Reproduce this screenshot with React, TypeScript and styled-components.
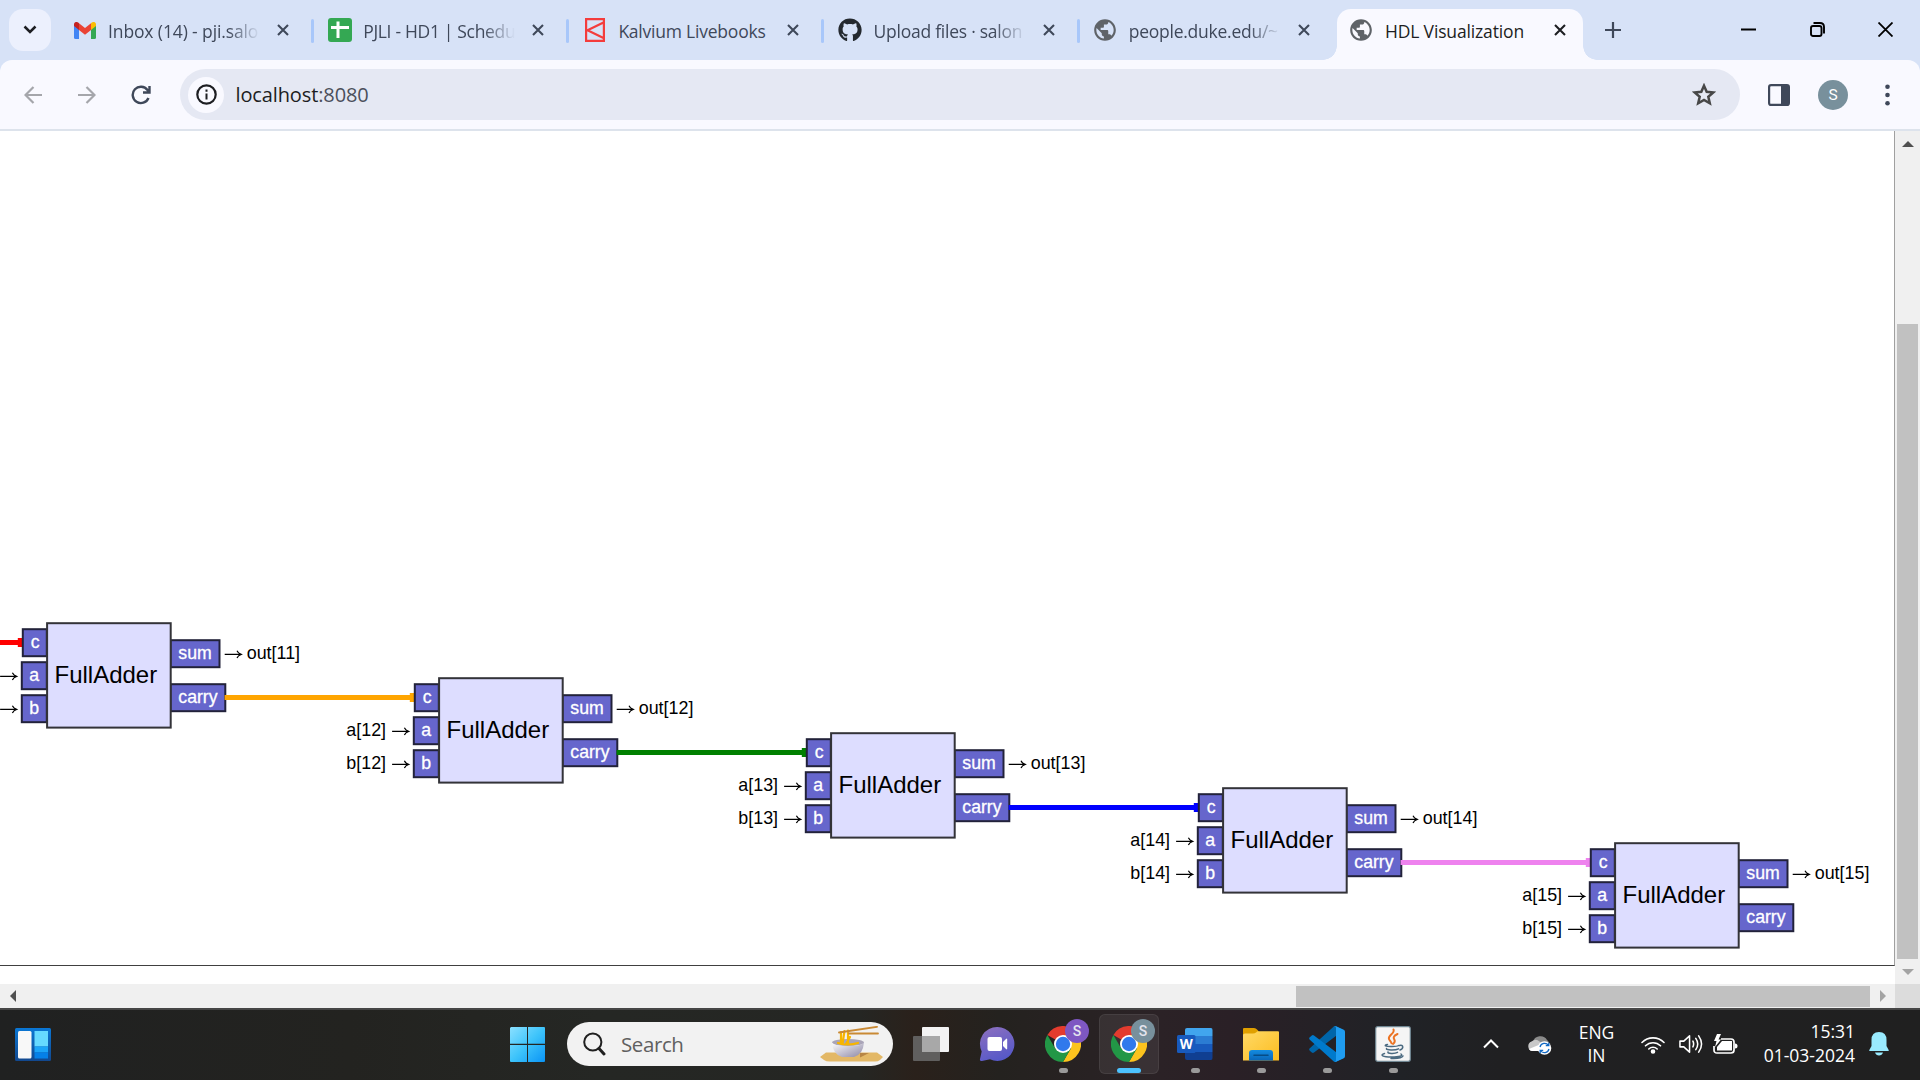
import React from "react";
import styled, { createGlobalStyle } from "styled-components";
import { FaGithub } from "react-icons/fa";
import { MdPublic } from "react-icons/md";

const ui = '"Open Sans", "Noto Sans", sans-serif';
const arial = '"Liberation Sans", Arial, sans-serif';

const Global = createGlobalStyle`
  * { box-sizing: border-box; }
  body { margin: 0; overflow: hidden; background: #fff; font-family: ${ui}; }
  svg { display: block; flex: none; }
`;

const Screen = styled.div`
  width: 1920px;
  height: 1080px;
  display: flex;
  flex-direction: column;
  overflow: hidden;
`;

/* ---------- browser chrome ---------- */
const TabStrip = styled.header`
  height: 60px;
  flex: none;
  display: flex;
  background: #d7e2f7;
  padding: 9px 0 0 9px;
`;
const TabSearch = styled.div`
  width: 42px;
  height: 42px;
  border-radius: 14px;
  background: #ecf0fd;
  display: grid;
  place-items: center;
  margin-right: 8px;
`;
const Tab = styled.div<{ $active?: boolean }>`
  position: relative;
  flex: none;
  width: ${(p) => (p.$active ? 246 : 255.2)}px;
  height: ${(p) => (p.$active ? 51 : 43)}px;
  margin-left: ${(p) => (p.$active ? 2 : 0)}px;
  padding-left: ${(p) => (p.$active ? 11 : 12)}px;
  display: flex;
  align-items: flex-start;
  background: ${(p) => (p.$active ? "#f9f9ff" : "transparent")};
  border-radius: 14px 14px 0 0;
  color: ${(p) => (p.$active ? "#1d1e22" : "#3f485a")};
  ${(p) =>
    p.$active &&
    `&::before, &::after {
      content: ""; position: absolute; bottom: 0; width: 14px; height: 14px;
    }
    &::before { left: -14px; background: radial-gradient(circle at 0 0, transparent 13.5px, #f9f9ff 14px); }
    &::after { right: -14px; background: radial-gradient(circle at 100% 0, transparent 13.5px, #f9f9ff 14px); }`}
`;
const Favicon = styled.div`
  width: 27px;
  height: 42px;
  display: grid;
  place-items: center;
  flex: none;
`;
const TabTitle = styled.div<{ $fade?: boolean; $spacing: number }>`
  flex: none;
  width: 152px;
  margin-left: 10px;
  height: 42px;
  line-height: 44px;
  font-size: 17.5px;
  letter-spacing: ${(p) => p.$spacing}px;
  white-space: nowrap;
  ${(p) => p.$fade && "mask-image: linear-gradient(90deg, #000 120px, transparent 152px);"}
`;
const CloseSlot = styled.div`
  width: 24px;
  height: 42px;
  margin-left: 11px;
  display: grid;
  place-items: center;
`;
const Divider = styled.div`
  width: 3px;
  height: 24px;
  margin: 10px 0 0 16px;
  border-radius: 2px;
  background: #a8c7fa;
`;
const NewTab = styled.div`
  width: 28px;
  height: 42px;
  margin-left: 16px;
  display: grid;
  place-items: center;
`;
const WindowButtons = styled.div`
  margin-left: auto;
  height: 42px;
  display: flex;
  align-items: center;
`;
const WinButton = styled.div`
  width: 68.5px;
  padding-bottom: 2px;
  display: grid;
  place-items: center;
`;
const ToolbarBack = styled.div`
  background: #d7e2f7;
  flex: none;
`;
const Toolbar = styled.nav`
  height: 71px;
  border-bottom: 2px solid #dde3ec;
  border-radius: 12px 12px 0 0;
  background: #f9f9ff;
  display: flex;
  align-items: center;
  padding-left: 6px;
`;
const ToolButton = styled.div<{ $w: number }>`
  width: ${(p) => p.$w}px;
  height: 51px;
  flex: none;
  display: grid;
  place-items: center;
`;
const Omnibox = styled.div`
  width: 1560px;
  height: 51px;
  flex: none;
  margin-left: 12px;
  border-radius: 26px;
  background: #e5e8f3;
  display: flex;
  align-items: center;
  padding: 0 24px 0 8px;
`;
const InfoDisc = styled.div`
  width: 36px;
  height: 36px;
  border-radius: 50%;
  background: #f9f9ff;
  display: grid;
  place-items: center;
`;
const Url = styled.div`
  flex: 1;
  margin-left: 11.5px;
  font-size: 20px;
  letter-spacing: -0.12px;
  line-height: 50px;
  color: #1d1e22;
  span { color: #4b4f5b; }
`;
const Avatar = styled.div`
  width: 30px;
  height: 30px;
  flex: none;
  border-radius: 50%;
  background: #78909c;
  color: #fff;
  font: 15.5px/31px Roboto, sans-serif;
  text-align: center;
`;

/* ---------- page ---------- */
const Viewport = styled.main`
  height: 877px;
  flex: none;
  display: grid;
  grid-template-columns: 1895px 25px;
  grid-template-rows: 853px 24px;
`;
const Page = styled.section`
  background: #fff;
  overflow: hidden;
`;
const Canvas = styled.div`
  height: 835px;
  border-right: 1px solid #a0a0a0;
  border-bottom: 1px solid #404040;
`;
const VScroll = styled.div`
  background: #f0f0f0;
  display: flex;
  flex-direction: column;
  align-items: center;
  justify-content: space-between;
`;
const HScroll = styled.div`
  background: #f0f0f0;
  display: flex;
  align-items: center;
`;
const ScrollArrow = styled.div`
  width: 25px;
  height: 25px;
  display: grid;
  place-items: center;
`;
const VThumb = styled.div`
  width: 21px;
  height: 635px;
  margin-top: auto;
  background: #c1c1c1;
`;
const HThumb = styled.div`
  width: 574px;
  height: 21px;
  margin-left: auto;
  background: #c1c1c1;
`;
const Corner = styled.div`
  background: #dcdcdc;
`;

const Body = styled.rect`
  fill: #ddddff;
  stroke: #333338;
  stroke-width: 2px;
`;
const Port = styled.rect`
  fill: #6666cc;
  stroke: #22223a;
  stroke-width: 2px;
`;
const NodeName = styled.text`
  font: 24px ${arial};
  fill: #000;
`;
const PortName = styled.text<{ $center?: boolean }>`
  font: 17.7px ${arial};
  fill: #fff;
  stroke: #fff;
  stroke-width: 0.3px;
  text-anchor: ${(p) => (p.$center ? "middle" : "start")};
`;
const Signal = styled.text`
  font: 17.9px ${arial};
  fill: #000;
`;
const Wire = styled.line`
  stroke-width: 5px;
`;
const Arrow = styled.path`
  fill: none;
  stroke: #000;
  stroke-width: 1.2px;
`;

const arrowAt = (x: number, y: number) => `M${x} ${y}h16.500M${x + 12.3} ${y - 3.6}q1 2.400 4.200 3.600q-3.200 1.200-4.200 3.600`;

const wires = ["#ff0000", "#ffa500", "#008000", "#0000ff", "#ee82ee"];

function Adder({ index }: { index: number }) {
  const i = index - 11;
  const x = 46.1 + i * 392;
  const y = 491.2 + i * 55;
  return (
    <g transform={`translate(${x} ${y})`}>
      <Wire x1={-213.5} x2={-24} y1={20.4} y2={20.4} stroke={wires[i]} />
      <rect x={-28.3} y={15.8} width={5} height={9} fill={wires[i]} />
      <Port x={-23.3} y={7} width={24} height={27} />
      <Port x={-24.3} y={40} width={25} height={27} />
      <Port x={-24.3} y={73} width={25} height={27} />
      <Port x={124.4} y={18} width={49} height={27} />
      <Port x={124.4} y={62} width={54.8} height={27} />
      <Body x={1} y={1} width={123.6} height={104.4} />
      <NodeName x={8.4} y={60.9}>FullAdder</NodeName>
      <PortName $center x={-11} y={25.6}>c</PortName>
      <PortName $center x={-12} y={58.6}>a</PortName>
      <PortName $center x={-12} y={91.4}>b</PortName>
      <PortName x={132.2} y={36.6}>sum</PortName>
      <PortName x={132.2} y={80.6}>carry</PortName>
      {i > 0 && <Signal x={-91.8} y={58.6}>{`a[${index}]`}</Signal>}
      <Arrow d={arrowAt(-46, 54.2)} />
      {i > 0 && <Signal x={-91.8} y={91.4}>{`b[${index}]`}</Signal>}
      <Arrow d={arrowAt(-46, 87.2)} />
      <Arrow d={arrowAt(178.6, 32.2)} />
      <Signal x={200.6} y={36.6}>{`out[${index}]`}</Signal>
    </g>
  );
}

/* ---------- taskbar ---------- */
const Taskbar = styled.footer`
  height: 72px;
  flex: none;
  border-top: 2px solid #464646;
  padding-bottom: 2px;
  background: linear-gradient(90deg, #202121 0, #232320 350px, #252724 600px, #252623 860px, #2a211b 915px, #24221f 1000px, #2b2226 1160px, #2a2026 1230px, #202226 1400px, #202022 1500px, #202020 1920px);
  display: flex;
  align-items: center;
  color: #fff;
`;
const WidgetSlot = styled.div`
  width: 494px;
  flex: none;
  padding-left: 15px;
`;
const Slot = styled.div`
  width: 66px;
  height: 68px;
  flex: none;
  display: grid;
  place-items: center;
`;
const Tile = styled.div<{ $active?: boolean }>`
  position: relative;
  width: 60px;
  height: 60px;
  border-radius: 6px;
  display: grid;
  place-items: center;
  background: ${(p) => (p.$active ? "rgba(255,255,255,.07)" : "transparent")};
  border: 1px solid ${(p) => (p.$active ? "rgba(255,255,255,.07)" : "transparent")};
`;
const Pill = styled.div<{ $active?: boolean }>`
  position: absolute;
  bottom: 0;
  left: calc(50% - ${(p) => (p.$active ? 12 : 4.5)}px);
  width: ${(p) => (p.$active ? 24 : 9)}px;
  height: 5px;
  border-radius: 3px;
  background: ${(p) => (p.$active ? "#4cc2ff" : "#9a9a9a")};
`;
const Badge = styled.div<{ $color: string }>`
  position: absolute;
  left: 31px;
  top: 4px;
  width: 24px;
  height: 24px;
  border-radius: 50%;
  background: ${(p) => p.$color};
  color: #e4e4ee;
  font: 500 14px/24px Roboto, sans-serif;
  text-align: center;
`;
const SearchBox = styled.div`
  width: 326px;
  height: 44px;
  flex: none;
  margin: 0 5px 0 7px;
  padding: 0 10px 0 16px;
  border-radius: 22px;
  background: #f2f2f2;
  display: flex;
  align-items: center;
`;
const SearchText = styled.div`
  flex: 1;
  margin-left: 15px;
  font-size: 20.5px;
  letter-spacing: -0.4px;
  color: #606060;
`;
const Tray = styled.div`
  margin-left: auto;
  width: 450px;
  display: flex;
  align-items: center;
`;
const TraySlot = styled.div<{ $w: number }>`
  width: ${(p) => p.$w}px;
  flex: none;
  display: grid;
  place-items: center;
`;
const Lang = styled.div`
  width: 61px;
  flex: none;
  text-align: center;
  font-size: 17.5px;
  line-height: 23px;
  letter-spacing: -0.1px;
`;
const Clock = styled.div`
  width: 107px;
  flex: none;
  padding-bottom: 2px;
  text-align: right;
  font-size: 17.5px;
  line-height: 24px;
`;

const Globe = () => <MdPublic size={26} color="#5f6368" />;

const Cross = ({ color = "#3f485a" }) => (
  <svg width="12" height="12" viewBox="0 0 12 12"><path d="M1 1l10 10M11 1L1 11" stroke={color} strokeWidth="2.1" /></svg>
);

const Gmail = () => (
  <svg width="22" height="17" viewBox="0 0 22 17">
    <path d="M0 3v12.5Q0 17 1.5 17H5V7z" fill="#4285f4" />
    <path d="M22 3v12.5q0 1.500-1.500 1.500H17V7z" fill="#34a853" />
    <path d="M5 8V1.200L11 6l6-4.800V8l-6 4.800z" fill="#ea4335" />
    <path d="M0 4V2.500C0 .2 2.500-.8 4.200.6L5 1.200V8L0 4z" fill="#c5221f" />
    <path d="M22 4V2.500c0-2.300-2.500-3.300-4.200-1.900L17 1.200V8z" fill="#fbbc04" />
  </svg>
);
const Sheets = () => (
  <svg width="24" height="24" viewBox="0 0 24 24"><rect width="24" height="24" rx="3" fill="#34a853" /><path d="M10 3.500V20M3 9.500h18" stroke="#fff" strokeWidth="3" /></svg>
);
const Kalvium = () => (
  <svg width="20" height="24" viewBox="0 0 20 24" fill="none" stroke="#f43c3c" strokeWidth="2.200"><path d="M1.100 1.100h17.800v21.800H1.100zM18.500 4.500L2.500 12.300l16 7.600" /></svg>
);

const tabs = [
  { title: "Inbox (14) - pji.salo", icon: <Gmail />, fade: true, spacing: -0.12 },
  { title: "PJLI - HD1 | Schedu", icon: <Sheets />, fade: true, spacing: -0.32 },
  { title: "Kalvium Livebooks", icon: <Kalvium />, spacing: -0.22 },
  { title: "Upload files · salon", icon: <FaGithub size={24} color="#24292f" />, fade: true, spacing: -0.25 },
  { title: "people.duke.edu/~", icon: <Globe />, fade: true, spacing: -0.25 },
];

const Chrome = () => (
  <svg width="36" height="36" viewBox="0 0 36 36">
    <path d="M18 18L2.400 9A18 18 0 0 1 33.600 9z" fill="#e33b2e" />
    <path d="M18 9h15.600A18 18 0 0 1 18 36l7.800-13.500z" fill="#fcc31e" />
    <path d="M2.400 9A18 18 0 0 0 18 36l7.800-13.500H10.200z" fill="#229746" />
    <circle cx="18" cy="18" r="9" fill="#fff" />
    <circle cx="18" cy="18" r="7.200" fill="#3079ec" />
  </svg>
);
const Word = () => (
  <svg width="36" height="36" viewBox="0 0 36 36">
    <path d="M8 4q0-2 2-2h24q1.500 0 1.500 2v6H8z" fill="#41a5ee" />
    <path d="M8 10h27.500v8H8z" fill="#2b7cd3" />
    <path d="M8 18h27.500v8H8z" fill="#185abd" />
    <path d="M8 26h27.500v6q0 2-1.500 2H10q-2 0-2-2z" fill="#103f91" />
    <rect x="0" y="9" width="18.500" height="18" rx="1.500" fill="#185abd" />
    <text x="9.200" y="23" textAnchor="middle" fontFamily="Open Sans" fontWeight="700" fontSize="13.500" fill="#fff">W</text>
  </svg>
);
const Folder = () => (
  <svg width="36" height="36" viewBox="0 0 36 36">
    <defs><linearGradient id="folder" x2="1" y2="1"><stop stopColor="#ffd966" /><stop offset="1" stopColor="#fcbd20" /></linearGradient>
    <linearGradient id="tray" x2="0" y2="1"><stop stopColor="#138be0" /><stop offset="1" stopColor="#0a66b8" /></linearGradient></defs>
    <path d="M0 3q0-1 1-1h10q2 0 3 1.500L15.500 5v5H0z" fill="#e0a000" />
    <path d="M0 9q0-1.500 2-1.500h8q2 0 3-1l1.500-1.200H35q1 0 1 1V34.500H0z" fill="url(#folder)" />
    <path d="M6 34.500V27q0-3 3-3h18q3 0 3 3v7.500z" fill="url(#tray)" />
    <path d="M11 29.200h14" stroke="#064c86" strokeWidth="1.500" strokeLinecap="round" />
  </svg>
);
const VSCode = () => (
  <svg width="36" height="36" viewBox="0 0 36 36">
    <path d="M35.200 4.200L27 .2q-1.500-.4-2.500.5L.8 22.300q-1.300 1.200 0 2.400l2 1.800q1 .8 2.200.1L33.500 5z" fill="#0065a9" />
    <path d="M35.200 31.800L27 35.800q-1.500.4-2.500-.5L.8 13.700q-1.300-1.200 0-2.400l2-1.800q1-.8 2.200-.1L33.500 31z" fill="#007acc" />
    <path d="M27 35.800q-1.600.4-2.500-.5 2.500 1.600 2.500-1.500V2.200q0-3-2.500-1.500Q25.500-.2 27 .2l7.700 3.600q1.300.6 1.300 2v24.400q0 1.400-1.300 2z" fill="#1f9cf0" />
  </svg>
);
const Java = () => (
  <svg width="36" height="36" viewBox="0 0 36 36">
    <rect x=".7" y=".7" width="34.600" height="34.600" rx="2" fill="#f5f5f5" stroke="#718894" strokeWidth="1.200" />
    <g fill="none" strokeLinecap="round">
      <path d="M18.500 3.500c1.800 4-6 6-4.500 9.500.5 1.500 2 2.500 2.500 4.200M22.500 8c-5 2.200-4 4.200-3 6 .7 1.500 0 2.800-1.500 4" stroke="#ec7424" strokeWidth="2" />
      <path d="M12.500 18.500c-4 .8-2.500 2.200 4.500 2 3.500 0 5.500-.3 6.500-1M11.500 22.500c-1 1.800 9 2 12 .3M13 26c-1 1.600 6.500 2 9.500.4M24.500 19.500c4-1.200 4.500 3 .5 4.500M9.500 27.500c-5 1.500-2 3.500 7 3.500 8 0 12-1.200 9.500-3M28 30c-1 2-6 2.800-12 2.500" stroke="#4b6a80" strokeWidth="1.500" />
    </g>
  </svg>
);
const Chat = () => (
  <svg width="36" height="36" viewBox="0 0 36 36">
    <defs><linearGradient id="chat" x1=".2" x2=".6" y2="1"><stop stopColor="#8a6fc0" /><stop offset="1" stopColor="#5558c8" /></linearGradient></defs>
    <path d="M18.500 1a17 17 0 1 1-7.500 32.300L3 35q-2.500.3-2-2l1.700-7.500A17 17 0 0 1 18.500 1z" fill="url(#chat)" />
    <rect x="8.500" y="11" width="14.500" height="14" rx="2" fill="#fff" />
    <path d="M24 16l3-3q1.200-1 1.200.5v9q0 1.500-1.200.5l-3-3z" fill="#fff" />
  </svg>
);
const Noodles = () => (
  <svg width="63" height="36" viewBox="0 0 63 36">
    <defs><linearGradient id="bowl" x2="1" y2="1"><stop stopColor="#fff" /><stop offset="1" stopColor="#8c87a4" /></linearGradient></defs>
    <path d="M0 31l6-4.500h51l6 4.500-3 3q-2 1.500-5 1.500H10q-4 0-6-1.500z" fill="#e3b866" />
    <path d="M40 27h9l-9 4.500z" fill="#b88645" />
    <ellipse cx="28" cy="16.500" rx="16" ry="3.500" fill="#aaa5b8" />
    <path d="M12 16.500q1 12 10 14.500h12q9-2.500 10-14.500-2 3.500-16 3.500t-16-3.500z" fill="url(#bowl)" />
    <path d="M18 17q10 3 20 0M21 6v12M24.500 5l-2 13M28 4.500V18M30 11l-4 7" stroke="#f7b500" strokeWidth="2.200" fill="none" strokeLinecap="round" />
    <path d="M19 6.500L57 .8M29 7.500h29" stroke="#c98a35" strokeWidth="1.800" strokeLinecap="round" />
  </svg>
);

const apps: { icon: React.ReactNode; badge?: string; active?: boolean }[] = [
  { icon: <Chrome />, badge: "#7e57c2" },
  { icon: <Chrome />, badge: "#78909c", active: true },
  { icon: <Word /> },
  { icon: <Folder /> },
  { icon: <VSCode /> },
  { icon: <Java /> },
];

export default function App() {
  return (
    <Screen>
      <Global />
      <TabStrip>
        <TabSearch>
          <svg width="14" height="10" viewBox="0 0 14 10"><path d="M1.500 1.500L7 7l5.500-5.500" fill="none" stroke="#1d1e22" strokeWidth="2.500" /></svg>
        </TabSearch>
        {tabs.map((t, i) => (
          <Tab key={t.title}>
            <Favicon>{t.icon}</Favicon>
            <TabTitle $fade={t.fade} $spacing={t.spacing}>{t.title}</TabTitle>
            <CloseSlot><Cross /></CloseSlot>
            {i < tabs.length - 1 && <Divider />}
          </Tab>
        ))}
        <Tab $active>
          <Favicon><Globe /></Favicon>
          <TabTitle $spacing={-0.15}>HDL Visualization</TabTitle>
          <CloseSlot><Cross color="#1d1e22" /></CloseSlot>
        </Tab>
        <NewTab><svg width="16" height="16" viewBox="0 0 16 16"><path d="M8 0v16M0 8h16" stroke="#3f485a" strokeWidth="2.200" /></svg></NewTab>
        <WindowButtons>
          <WinButton><svg width="15" height="15"><path d="M0 7.500h15" stroke="#000" strokeWidth="2" /></svg></WinButton>
          <WinButton><svg width="15" height="15" viewBox="0 0 15 15" fill="none" stroke="#000" strokeWidth="1.900"><rect x="1" y="4" width="10.500" height="10" rx="2" /><path d="M3.500 1H10q4 0 4 4v6.500" /></svg></WinButton>
          <WinButton><svg width="15" height="15" viewBox="0 0 15 15"><path d="M.5.5l14 14M14.500.5l-14 14" stroke="#000" strokeWidth="1.800" /></svg></WinButton>
        </WindowButtons>
      </TabStrip>
      <ToolbarBack>
        <Toolbar>
          <ToolButton $w={54}><svg width="18" height="18" viewBox="0 0 18 18" fill="none" stroke="#a5a6ab" strokeWidth="2.200"><path d="M18 9H2M9.500 1L1.500 9l8 8" /></svg></ToolButton>
          <ToolButton $w={54}><svg width="18" height="18" viewBox="0 0 18 18" fill="none" stroke="#a5a6ab" strokeWidth="2.200"><path d="M0 9h16M8.500 1l8 8-8 8" /></svg></ToolButton>
          <ToolButton $w={54}><svg width="20" height="20" viewBox="0 0 20 20" fill="none" stroke="#3f485a" strokeWidth="2.400"><path d="M17.500 13A8.200 8.200 0 1 1 16.500 5L18 7M18.500 1v6.500H12" /></svg></ToolButton>
          <Omnibox>
            <InfoDisc><svg width="21" height="21" viewBox="0 0 21 21" fill="none" stroke="#1d1e22"><circle cx="10.500" cy="10.500" r="9.200" strokeWidth="2.200" /><path d="M10.500 9.500v6M10.500 5.500v2.200" strokeWidth="2" /></svg></InfoDisc>
            <Url>localhost<span>:8080</span></Url>
            <svg width="24" height="23" viewBox="0 0 24 23"><path d="M12 2.700l2.700 6.100 6.700.6-5.100 4.400 1.500 6.500-5.800-3.400-5.800 3.400 1.500-6.500-5.100-4.400 6.700-.6z" fill="none" stroke="#474747" strokeWidth="2.500" /></svg>
          </Omnibox>
          <ToolButton $w={78}><svg width="22" height="22" viewBox="0 0 22 22"><rect x="1.100" y="1.100" width="19.800" height="19.800" rx="2" fill="none" stroke="#3f485a" strokeWidth="2.200" /><path d="M13 1h8v20h-8z" fill="#3f485a" /></svg></ToolButton>
          <Avatar>S</Avatar>
          <ToolButton $w={78}><svg width="5" height="22" viewBox="0 0 5 22" fill="#3f485a"><circle cx="2.500" cy="2.700" r="2.300" /><circle cx="2.500" cy="11" r="2.300" /><circle cx="2.500" cy="19.300" r="2.300" /></svg></ToolButton>
        </Toolbar>
      </ToolbarBack>

      <Viewport>
        <Page>
          <Canvas>
            <svg width="1894" height="834">
              {[11, 12, 13, 14, 15].map((n) => <Adder key={n} index={n} />)}
            </svg>
          </Canvas>
        </Page>
        <VScroll>
          <ScrollArrow><svg width="12" height="6"><path d="M0 6h12L6 0z" fill="#505050" /></svg></ScrollArrow>
          <VThumb />
          <ScrollArrow><svg width="12" height="6"><path d="M0 0h12L6 6z" fill="#a3a3a3" /></svg></ScrollArrow>
        </VScroll>
        <HScroll>
          <ScrollArrow><svg width="6" height="12"><path d="M6 0v12L0 6z" fill="#505050" /></svg></ScrollArrow>
          <HThumb />
          <ScrollArrow><svg width="6" height="12"><path d="M0 0v12l6-6z" fill="#a3a3a3" /></svg></ScrollArrow>
        </HScroll>
        <Corner />
      </Viewport>

      <Taskbar>
        <WidgetSlot>
          <svg width="36" height="33" viewBox="0 0 36 33">
            <defs><linearGradient id="wid" x2="0" y2="1"><stop stopColor="#0a77d5" /><stop offset="1" stopColor="#12488e" /></linearGradient></defs>
            <rect width="36" height="33" rx="1.500" fill="url(#wid)" />
            <rect x="3" y="3" width="13.500" height="27.500" rx="1.500" fill="#f8f8f8" />
            <path d="M19.500 3H33v15.500H19.500z" fill="#66d9ff" /><path d="M19.500 18.500H33v6H19.500z" fill="#1ba4f8" /><path d="M19.500 24.500H33v6H19.500z" fill="#0580e8" />
          </svg>
        </WidgetSlot>
        <Slot>
          <svg width="35" height="35" viewBox="0 0 35 35">
            <defs><linearGradient id="win" gradientUnits="userSpaceOnUse" x1="0" y1="0" x2="35" y2="35"><stop stopColor="#8be0ff" /><stop offset=".5" stopColor="#3ec4fb" /><stop offset="1" stopColor="#0a94f5" /></linearGradient></defs>
            <path d="M1 0h16v16.800H0V1zM18 0h16q1 0 1 1v15.800H18zM0 18h17v17H1q-1 0-1-1zM18 18h17v16q0 1-1 1H18z" fill="url(#win)" />
          </svg>
        </Slot>
        <SearchBox>
          <svg width="23" height="24" viewBox="0 0 23 24" fill="none" stroke="#202020" strokeLinecap="round"><circle cx="9.800" cy="10" r="8.600" strokeWidth="2" /><path d="M16 16.500l5 5.500" strokeWidth="3" /></svg>
          <SearchText>Search</SearchText>
          <Noodles />
        </SearchBox>
        <Slot>
          <svg width="36" height="34" viewBox="0 0 36 34"><rect x="9" width="27" height="25" rx="1" fill="#f3f3f3" /><path d="M0 10q0-1 1-1h26v24q0 1-1 1H1q-1 0-1-1z" fill="#666" fillOpacity=".9" /><path d="M9 9h18v16H9z" fill="#a8a8a8" /></svg>
        </Slot>
        <Slot><Chat /></Slot>
        {apps.map((a, i) => (
          <Slot key={i}>
            <Tile $active={a.active}>
              {a.icon}
              {a.badge && <Badge $color={a.badge}>S</Badge>}
              <Pill $active={a.active} />
            </Tile>
          </Slot>
        ))}
        <Tray>
          <TraySlot $w={42}><svg width="16" height="10" viewBox="0 0 16 10"><path d="M1 8.500l7-7 7 7" fill="none" stroke="#fff" strokeWidth="2" /></svg></TraySlot>
          <TraySlot $w={54}>
            <svg width="25" height="21" viewBox="0 0 25 21">
              <path d="M6 8a7.500 7 0 0 1 14-2q2 1 2 4l-9 4z" fill="#8a8a8a" />
              <path d="M5 17a5 5 0 0 1-.5-9.500Q9 4 12.500 7.500L20 12l-8 5z" fill="#c8c8c8" />
              <path d="M2 15l12-5v7H5q-2 0-3-2z" fill="#fff" />
              <circle cx="17.500" cy="14" r="6.800" fill="#fff" />
              <path d="M13 13a4.700 4.700 0 0 1 8.500-1.500M22 15a4.700 4.700 0 0 1-8.500 1.500M21.800 8.700v3h-3M13.200 19.300v-3h3" fill="none" stroke="#1269c4" strokeWidth="1.300" />
            </svg>
          </TraySlot>
          <Lang>ENG<br />IN</Lang>
          <TraySlot $w={52}>
            <svg width="24" height="19" viewBox="0 0 24 19" fill="none" stroke="#fff" strokeWidth="1.600" strokeLinecap="round"><path d="M1 7.500a15.500 15.500 0 0 1 22 0M4.500 10.800a10.600 10.600 0 0 1 15 0M7.800 14a6 6 0 0 1 8.400 0" /><circle cx="12" cy="16.500" r="1.500" fill="#fff" /></svg>
          </TraySlot>
          <TraySlot $w={24}>
            <svg width="24" height="20" viewBox="0 0 25 20" fill="none" stroke="#fff" strokeWidth="1.600" strokeLinejoin="round" strokeLinecap="round"><path d="M1 7h4l6-5.500v17L5 13H1zM14.500 7q1.500 3 0 6M17.500 4.200q4 5.800 0 11.600M20.500 1.500q6 8.500 0 17" /></svg>
          </TraySlot>
          <TraySlot $w={45}>
            <svg width="25" height="21" viewBox="0 0 25 21"><path d="M8 5h10q3 0 3 3v8q0 3-3 3H4q-3 0-3-3v-4" fill="none" stroke="#fff" strokeWidth="1.700" /><path d="M9 7h10v9.500H4V13z" fill="#fff" /><path d="M22 9.500q2.500 0 2.500 2.500T22 14.500z" fill="#fff" /><path d="M4 0l-3 7h2.500L2 13l6-7.500H5.500L8 0z" fill="#fff" /></svg>
          </TraySlot>
          <Clock>15:31<br />01-03-2024</Clock>
          <TraySlot $w={48}>
            <svg width="20" height="24" viewBox="0 0 20 24" fill="#99ebff"><path d="M10 0q7.500 0 7.500 8v6l2.300 4.200q.3.800-.6.800H.8q-.9 0-.6-.8L2.500 14V8Q2.500 0 10 0zM6 20.500h8q-1 3-4 3t-4-3z" /></svg>
          </TraySlot>
        </Tray>
      </Taskbar>
    </Screen>
  );
}
